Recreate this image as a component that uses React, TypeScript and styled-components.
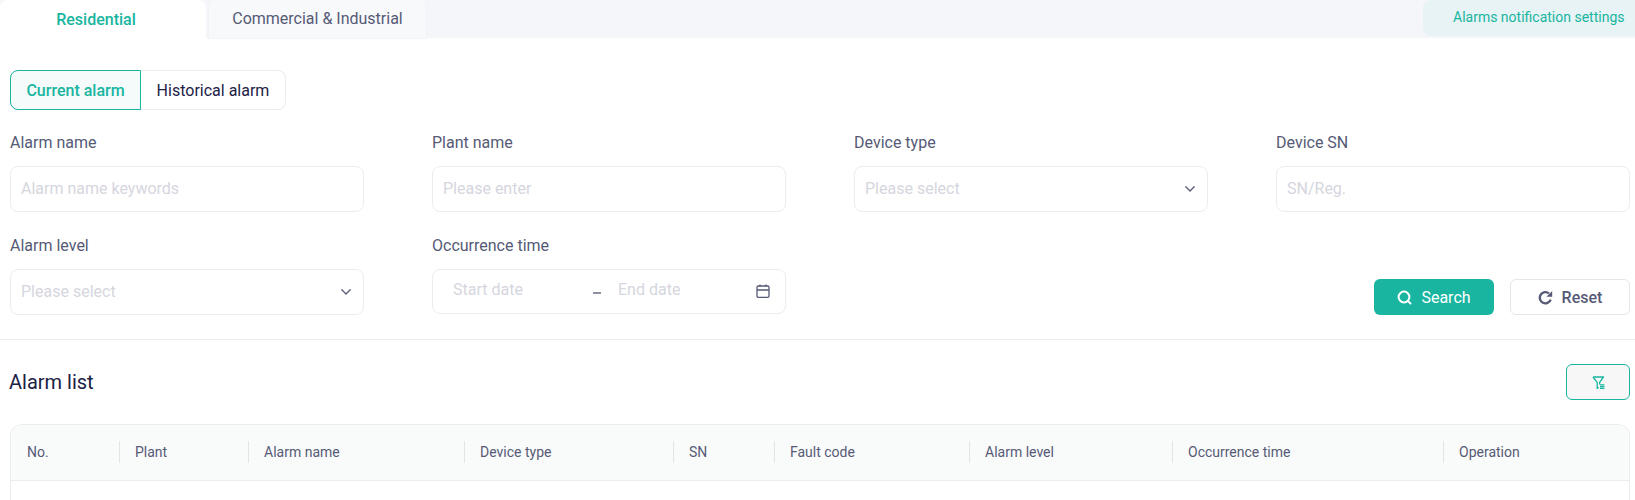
import React from 'react';
import styled, { createGlobalStyle } from 'styled-components';

const Global = createGlobalStyle`
  html, body { margin: 0; padding: 0; background: #fff; }
  body { font-family: Roboto, "Liberation Sans", sans-serif; overflow: hidden; }
  * { box-sizing: border-box; }
`;
const Page = styled.div`width: 1635px; height: 500px; overflow: hidden; background: #fff;`;
const TopBar = styled.div`display: flex; height: 38px; background: #f4f6f9; align-items: flex-start;`;
const TopTab = styled.div<{ $active?: boolean }>`
  height: 39px; display: flex; align-items: center; justify-content: center; font-size: 16px;
  border-radius: 8px 8px 0 0; position: relative;
  ${p => p.$active
    ? 'width: 206px; background: #fff; color: #19b5a1; font-weight: 500; margin-right: 2px; padding: 0 14px 1px 0;'
    : 'width: 219px; background: #f8f9fb; color: #565a76; border: 1px solid #f1f3f6; border-top: 0; padding-bottom: 1px;'}
`;
const NotifyButton = styled.div`
  margin-left: auto; width: 212px; height: 36px; background: #e7f3f4; color: #19b5a1; font-size: 14px;
  border-radius: 8px 0 0 8px; display: flex; align-items: center; padding: 0 0 3px 30px; white-space: nowrap;
`;
const Filters = styled.div`padding: 32px 5px 0 10px;`;
const Segments = styled.div`display: flex; height: 40px;`;
const Segment = styled.div<{ $active?: boolean }>`
  display: flex; align-items: center; justify-content: center; font-size: 16px;
  ${p => p.$active
    ? 'width: 131px; background: #f4fbfa; color: #19b5a1; font-weight: 500; border: 1px solid #19b5a1; border-radius: 8px 0 0 8px;'
    : 'width: 145px; color: #1c2145; border: 1px solid #ebecef; border-left: 0; border-radius: 0 8px 8px 0;'}
`;
const Grid = styled.div`display: grid; grid-template-columns: repeat(4, 354px); column-gap: 68px; margin-top: 20px;`;
const Field = styled.div`display: flex; flex-direction: column; height: 103px;`;
const Label = styled.label`font-size: 16px; line-height: 26px; color: #565a76; height: 36px;`;
const Box = styled.div`
  height: 46px; border: 1px solid #ebecef; border-radius: 8px; padding: 0 10px 2px; display: flex; align-items: center;
  justify-content: space-between; font-size: 16px; color: #d5d6de;
`;
const DateBox = styled(Box)`padding: 0 14px 0 20px; height: 45px;`;
const DateText = styled.span<{ $w: number }>`width: ${p => p.$w}px;`;
const Dash = styled.span`width: 25px; height: 2px; display: flex; justify-content: flex-start; margin-top: 6px;
  &::before { content: ''; width: 8px; height: 2px; background: #8d90a3; }`;
const DateParts = styled.div`display: flex; align-items: center; margin-top: -4px;`;
const Actions = styled.div`grid-column: 3 / 5; display: flex; justify-content: flex-end; gap: 16px; padding-top: 46px;`;
const Button = styled.div<{ $primary?: boolean }>`
  width: 120px; height: 36px; border-radius: 6px; display: flex; align-items: center; justify-content: center; gap: 9px; font-size: 16px;
  ${p => p.$primary
    ? 'background: #19b5a1; color: #fff;'
    : 'background: #fff; color: #565a76; border: 1px solid #e5e6ec; font-weight: 500;'}
`;
const Divider = styled.div`height: 1px; background: #ebecef; margin-top: 3px;`;
const ListHead = styled.div`display: flex; align-items: center; justify-content: space-between; padding: 24px 5px 0 9px;`;
const Title = styled.h2`margin: 0; font-size: 20px; font-weight: 400; color: #1c2145;`;
const FilterButton = styled.div`
  width: 64px; height: 36px; border: 1px solid #19b5a1; border-radius: 6px; background: #f7f7f7;
  display: flex; align-items: center; justify-content: center;
`;
const Table = styled.div`margin: 24px 5px 0 10px; height: 120px; border: 1px solid #ebecef; border-bottom: 0; border-radius: 12px 12px 0 0; overflow: hidden;`;
const HeadRow = styled.div`
  display: grid; grid-template-columns: 108px 129px 216px 209px 101px 195px 203px 271px 1fr;
  height: 56px; background: #f9fafa; border-bottom: 1px solid #ebecef; align-items: center; padding-bottom: 2px;
`;
const HeadCell = styled.div<{ $first?: boolean }>`
  font-size: 14px; color: #565a76; height: 22px; line-height: 22px; padding-left: ${p => (p.$first ? 16 : 15)}px;
  border-left: ${p => (p.$first ? '0' : '1px solid #e2e4e8')}; white-space: nowrap;
`;
const ChevronSvg = styled.svg`margin-top: 2px;`;
const CalendarSvg = styled.svg`margin-bottom: 2px;`;

const Chevron = () => (
  <ChevronSvg width="14" height="14" viewBox="0 0 14 14" fill="none" stroke="#565a76" strokeWidth="1.3" strokeLinecap="round" strokeLinejoin="round">
    <path d="M2.8 4.8 7 9l4.2-4.2" />
  </ChevronSvg>
);
const CalendarIcon = () => (
  <CalendarSvg width="16" height="16" viewBox="0 0 16 16" fill="none" stroke="#565a76" strokeWidth="1.3" strokeLinejoin="round">
    <rect x="2" y="3" width="12" height="11.4" rx="1.4" />
    <path d="M2 7h12M5 1.4V3.4M11 1.4V3.4" />
  </CalendarSvg>
);
const SearchIcon = () => (
  <svg width="15" height="15" viewBox="0 0 15 15" fill="none" stroke="#fff" strokeWidth="2" strokeLinecap="round">
    <circle cx="7" cy="7" r="5.4" />
    <path d="m11.2 11.2 2.3 2.3" />
  </svg>
);
const ResetIcon = () => (
  <svg width="15" height="15" viewBox="0 0 15 15" fill="none">
    <path d="M12.7 9.6A5.6 5.6 0 1 1 11 3.4" stroke="#565a76" strokeWidth="2.4" />
    <path d="M14.2 1v5.8H8.4z" fill="#565a76" />
  </svg>
);
const FunnelIcon = () => (
  <svg width="13" height="13" viewBox="0 0 13 13" fill="none" stroke="#19b5a1" strokeWidth="1.3" strokeLinejoin="round">
    <path d="M1 1h10.5L7.6 6.4v2M1 1l4.2 5.4v6l1.6-.9" />
    <path d="M8 8.8h4.4M8 10.6h4.4M8 12.4h4.4" />
  </svg>
);

const columns = ['No.', 'Plant', 'Alarm name', 'Device type', 'SN', 'Fault code', 'Alarm level', 'Occurrence time', 'Operation'];

export default function App() {
  return (
    <Page>
      <Global />
      <TopBar>
        <TopTab $active>Residential</TopTab>
        <TopTab>Commercial &amp; Industrial</TopTab>
        <NotifyButton>Alarms notification settings</NotifyButton>
      </TopBar>
      <Filters>
        <Segments>
          <Segment $active>Current alarm</Segment>
          <Segment>Historical alarm</Segment>
        </Segments>
        <Grid>
          <Field><Label>Alarm name</Label><Box>Alarm name keywords</Box></Field>
          <Field><Label>Plant name</Label><Box>Please enter</Box></Field>
          <Field><Label>Device type</Label><Box>Please select<Chevron /></Box></Field>
          <Field><Label>Device SN</Label><Box>SN/Reg.</Box></Field>
          <Field><Label>Alarm level</Label><Box>Please select<Chevron /></Box></Field>
          <Field>
            <Label>Occurrence time</Label>
            <DateBox>
              <DateParts>
                <DateText $w={140}>Start date</DateText>
                <Dash />
                <DateText $w={120}>End date</DateText>
              </DateParts>
              <CalendarIcon />
            </DateBox>
          </Field>
          <Actions>
            <Button $primary><SearchIcon />Search</Button>
            <Button><ResetIcon />Reset</Button>
          </Actions>
        </Grid>
      </Filters>
      <Divider />
      <ListHead>
        <Title>Alarm list</Title>
        <FilterButton><FunnelIcon /></FilterButton>
      </ListHead>
      <Table>
        <HeadRow>
          {columns.map((c, i) => <HeadCell key={c} $first={i === 0}>{c}</HeadCell>)}
        </HeadRow>
      </Table>
    </Page>
  );
}
